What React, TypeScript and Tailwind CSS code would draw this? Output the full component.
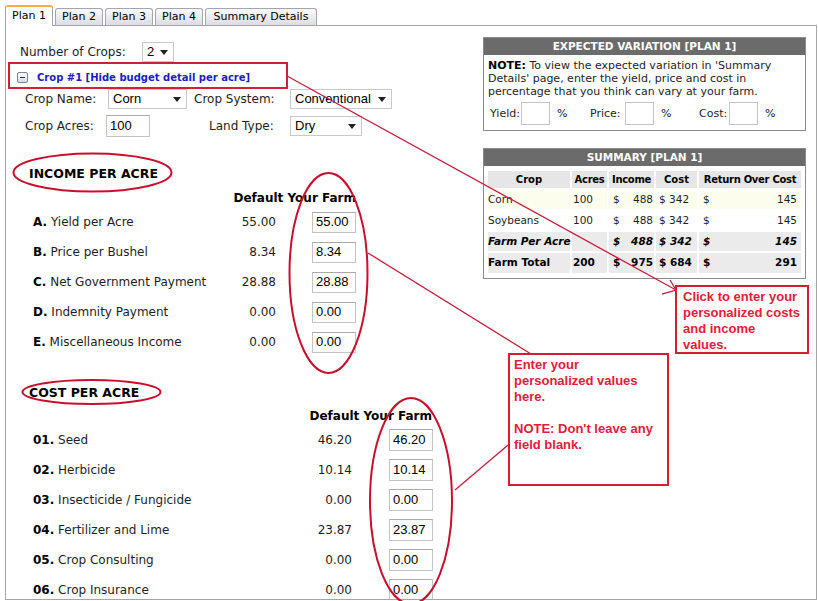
import React from "react";

const ARIAL = "font-['Liberation_Sans',Arial,sans-serif]";

function Sel({ value, w }: { value: string; w: string }) {
  return (
    <div
      className={`${w} h-[20px] border border-[#c9c9c9] bg-white flex items-center justify-between pl-[4px] pr-[5px] ${ARIAL} text-[13px] text-black`}
    >
      <span>{value}</span>
      <svg width="8" height="5" viewBox="0 0 8 5">
        <path d="M0 0h8L4 5z" fill="#222" />
      </svg>
    </div>
  );
}

function Inp({ value, w, h }: { value: string; w: string; h: string }) {
  return (
    <div
      className={`${w} ${h} border border-[#c4c4c4] border-t-[#a9a9a9] bg-white flex items-center pl-[3px] ${ARIAL} text-[13px] text-black`}
    >
      {value}
    </div>
  );
}

function Tab({ label, active, w }: { label: string; active?: boolean; w: string }) {
  if (active)
    return (
      <div
        className={`${w} h-[21px] relative z-10 -mb-px bg-white border-t-2 border-t-[#f2b33d] border-x border-x-[#a5a5a5] rounded-t-[3px] flex items-center justify-center text-[11px] text-black`}
      >
        {label}
      </div>
    );
  return (
    <div
      className={`${w} h-[17px] bg-gradient-to-b from-[#fbfbfb] to-[#dcdce4] border border-b-0 border-[#a4a4b4] rounded-t-[3px] flex items-center justify-center text-[11px] text-black`}
    >
      {label}
    </div>
  );
}

const income: [string, string, string][] = [
  ["A.", "Yield per Acre", "55.00"],
  ["B.", "Price per Bushel", "8.34"],
  ["C.", "Net Government Payment", "28.88"],
  ["D.", "Indemnity Payment", "0.00"],
  ["E.", "Miscellaneous Income", "0.00"],
];

const costs: [string, string, string][] = [
  ["01.", "Seed", "46.20"],
  ["02.", "Herbicide", "10.14"],
  ["03.", "Insecticide / Fungicide", "0.00"],
  ["04.", "Fertilizer and Lime", "23.87"],
  ["05.", "Crop Consulting", "0.00"],
  ["06.", "Crop Insurance", "0.00"],
];

function SmallInput() {
  return <div className="w-[29px] h-[23px] border border-[#c4c4c4] bg-white" />;
}

function MoneyCell({ bg, v, pr }: { bg: string; v: string; pr: string }) {
  return (
    <td className={`${bg} p-0`}>
      <div className={`flex justify-between pl-[4px] ${pr}`}>
        <span>$</span>
        <span>{v}</span>
      </div>
    </td>
  );
}

export default function App() {
  return (
    <div className="relative w-[818px] h-[601px] overflow-hidden bg-white text-[#1e1e1e] font-['DejaVu_Sans',Verdana,sans-serif]">
      {/* Tabs */}
      <div className="flex items-end h-[25px] pl-[5px] gap-[2px]">
        <Tab label="Plan 1" active w="w-[48px]" />
        <Tab label="Plan 2" w="w-[48px]" />
        <Tab label="Plan 3" w="w-[48px]" />
        <Tab label="Plan 4" w="w-[48px]" />
        <Tab label="Summary Details" w="w-[112px]" />
      </div>

      {/* Panel */}
      <div className="ml-[5px] w-[812px] h-[575px] border border-[#a5a5a5] flex overflow-hidden">
        {/* Left column */}
        <div className="w-[477px] shrink-0 flex flex-col text-[12px]">
          <div className="mt-[15px] h-[22px] shrink-0 flex items-center pl-[14px]">
            <span className="w-[122px]">Number of Crops:</span>
            <Sel value="2" w="w-[32px]" />
          </div>

          <div className="mt-[3px] h-[22px] shrink-0 flex items-center pl-[11px]">
            <div className="w-[11px] h-[11px] rounded-[2px] border border-[#7d8496] bg-gradient-to-b from-white to-[#d6dae4] flex items-center justify-center">
              <div className="w-[5px] h-px bg-[#333]" />
            </div>
            <span className="ml-[9px] text-[10px] font-bold text-[#1c1cc8]">
              Crop #1 [Hide budget detail per acre]
            </span>
          </div>

          <div className="h-[22px] shrink-0 flex items-center pl-[19px]">
            <span className="w-[83px]">Crop Name:</span>
            <Sel value="Corn" w="w-[79px]" />
            <span className="ml-[7px] w-[96px]">Crop System:</span>
            <Sel value="Conventional" w="w-[102px]" />
          </div>

          <div className="mt-[4px] h-[24px] shrink-0 flex items-center pl-[19px]">
            <span className="w-[81px]">Crop Acres:</span>
            <Inp value="100" w="w-[44px]" h="h-[22px]" />
            <span className="ml-[59px] w-[81px]">Land Type:</span>
            <Sel value="Dry" w="w-[72px]" />
          </div>

          <div className="mt-[26px] h-[20px] shrink-0 flex items-center pl-[23px] text-[12.5px] font-bold text-black">
            INCOME PER ACRE
          </div>

          <div className="mt-[5px] h-[18px] shrink-0 flex items-center pl-[27px] font-bold text-black">
            <span className="w-[185px]" />
            <span className="w-[138px] text-right whitespace-nowrap">Default Your Farm</span>
          </div>

          {income.map(([k, label, v]) => (
            <div key={k} className="h-[30px] shrink-0 flex items-center pl-[27px]">
              <span className="w-[185px] whitespace-nowrap">
                <b className="text-black">{k}</b> {label}
              </span>
              <span className="w-[58px] text-right">{v}</span>
              <div className="ml-[36px]">
                <Inp value={v} w="w-[44px]" h="h-[21px]" />
              </div>
            </div>
          ))}

          <div className="mt-[26px] h-[20px] shrink-0 flex items-center pl-[23px] text-[12.5px] font-bold text-black">
            COST PER ACRE
          </div>

          <div className="mt-[4px] h-[18px] shrink-0 flex items-center pl-[27px] font-bold text-black">
            <span className="w-[261px]" />
            <span className="w-[138px] text-right whitespace-nowrap">Default Your Farm</span>
          </div>

          {costs.map(([k, label, v]) => (
            <div key={k} className="h-[30px] shrink-0 flex items-center pl-[27px]">
              <span className="w-[261px] whitespace-nowrap">
                <b className="text-black">{k}</b> {label}
              </span>
              <span className="w-[58px] text-right">{v}</span>
              <div className="ml-[37px]">
                <Inp value={v} w="w-[44px]" h="h-[22px]" />
              </div>
            </div>
          ))}
        </div>

        {/* Right column */}
        <div className="w-[323px] shrink-0 flex flex-col">
          <div className="mt-[11px] shrink-0 border border-[#8a8a8a]">
            <div className="h-[17px] bg-[#6b6b6b] text-white text-[10.5px] font-bold flex items-center justify-center">
              EXPECTED VARIATION [PLAN 1]
            </div>
            <div className="px-[4px] pt-[4px] pb-[5px] text-[11px] leading-[13px] text-[#1e1e1e]">
              <p className="whitespace-nowrap">
                <b className="text-black">NOTE:</b> To view the expected variation in 'Summary
                <br />
                Details' page, enter the yield, price and cost in
                <br />
                percentage that you think can vary at your farm.
              </p>
              <div className="mt-[4px] flex items-center h-[23px]">
                <span className="ml-[2px] w-[31px]">Yield:</span>
                <SmallInput />
                <span className="ml-[7px] w-[33px]">%</span>
                <span className="w-[35px]">Price:</span>
                <SmallInput />
                <span className="ml-[7px] w-[38px]">%</span>
                <span className="w-[30px]">Cost:</span>
                <SmallInput />
                <span className="ml-[7px]">%</span>
              </div>
            </div>
          </div>

          <div className="mt-[17px] shrink-0 border border-[#8a8a8a]">
            <div className="h-[17px] bg-[#6b6b6b] text-white text-[10.5px] font-bold flex items-center justify-center">
              SUMMARY [PLAN 1]
            </div>
            <div className="px-[2px] pt-[3px] pb-[3px]">
              <table className="table-fixed w-[317px] border-separate border-spacing-[2px] text-[10.5px] text-[#1e1e1e]">
                <colgroup>
                  <col className="w-[82px]" />
                  <col className="w-[35px]" />
                  <col className="w-[45px]" />
                  <col className="w-[41px]" />
                  <col className="w-[102px]" />
                </colgroup>
                <thead>
                  <tr className="h-[17px] font-bold text-black text-[10px]">
                    <td className="bg-[#e6e6e6] text-center p-0">Crop</td>
                    <td className="bg-[#e6e6e6] text-center p-0 tracking-[-0.3px]">Acres</td>
                    <td className="bg-[#e6e6e6] text-center p-0 tracking-[-0.3px]">Income</td>
                    <td className="bg-[#e6e6e6] text-center p-0">Cost</td>
                    <td className="bg-[#e6e6e6] text-center p-0 whitespace-nowrap tracking-[-0.3px]">
                      Return Over Cost
                    </td>
                  </tr>
                </thead>
                <tbody>
                  {[
                    ["Corn", "bg-[#fdfdee]"],
                    ["Soybeans", "bg-white"],
                  ].map(([name, bg]) => (
                    <tr key={name} className="h-[19px]">
                      <td className={`${bg} p-0`}>{name}</td>
                      <td className={`${bg} p-0 pl-[1px]`}>100</td>
                      <MoneyCell bg={bg} v="488" pr="pr-[1px]" />
                      <td className={`${bg} p-0 pl-[3px] whitespace-nowrap`}>$ 342</td>
                      <MoneyCell bg={bg} v="145" pr="pr-[4px]" />
                    </tr>
                  ))}
                  <tr className="h-[19px] font-bold italic text-black">
                    <td className="bg-[#ebebeb] p-0 whitespace-nowrap">Farm Per Acre</td>
                    <td className="bg-[#ebebeb] p-0"></td>
                    <MoneyCell bg="bg-[#ebebeb]" v="488" pr="pr-[1px]" />
                    <td className="bg-[#ebebeb] p-0 pl-[3px] whitespace-nowrap">$ 342</td>
                    <MoneyCell bg="bg-[#ebebeb]" v="145" pr="pr-[4px]" />
                  </tr>
                  <tr className="h-[20px] font-bold text-black">
                    <td className="bg-[#ebebeb] p-0">Farm Total</td>
                    <td className="bg-[#ebebeb] p-0 pl-[1px]">200</td>
                    <MoneyCell bg="bg-[#ebebeb]" v="975" pr="pr-[1px]" />
                    <td className="bg-[#ebebeb] p-0 pl-[3px] whitespace-nowrap">$ 684</td>
                    <MoneyCell bg="bg-[#ebebeb]" v="291" pr="pr-[4px]" />
                  </tr>
                </tbody>
              </table>
            </div>
          </div>
        </div>
      </div>

      {/* Annotation overlay */}
      <svg
        className="absolute left-0 top-0 pointer-events-none"
        width="818"
        height="601"
        viewBox="0 0 818 601"
      >
        <g fill="none" stroke="#c8102e" strokeWidth="2">
          <rect x="9" y="63" width="278" height="25" stroke="#d21f33" />
          <ellipse cx="92.5" cy="172.5" rx="79" ry="19" />
          <ellipse cx="328.5" cy="273" rx="39" ry="100" />
          <ellipse cx="91.5" cy="392" rx="69" ry="12" />
          <ellipse cx="411" cy="501" rx="41" ry="103" />
        </g>
        <g fill="none" stroke="#c41e3a" strokeWidth="1.3">
          <line x1="287" y1="76" x2="676" y2="290" />
          <polyline points="662,294 676,290 670,280" />
          <line x1="368" y1="253" x2="531" y2="354" />
          <line x1="455" y1="490" x2="514" y2="440" />
        </g>
      </svg>

      {/* Callouts */}
      <div className={`absolute left-[675px] top-[285px] w-[134px] h-[69px] border-2 border-[#d21f33] bg-white pl-[6px] pt-[2px] ${ARIAL} text-[13px] leading-[16px] font-bold text-[#e0203a] whitespace-nowrap`}>
        Click to enter your
        <br />
        personalized costs
        <br />
        and income
        <br />
        values.
      </div>
      <div className={`absolute left-[508px] top-[353px] w-[161px] h-[133px] border-2 border-[#d21f33] bg-white pl-[4px] pt-[2px] ${ARIAL} text-[13px] leading-[16px] font-bold text-[#e0203a] whitespace-nowrap`}>
        <p>
          Enter your
          <br />
          personalized values
          <br />
          here.
        </p>
        <p className="mt-[16px]">
          NOTE: Don't leave any
          <br />
          field blank.
        </p>
      </div>
    </div>
  );
}
